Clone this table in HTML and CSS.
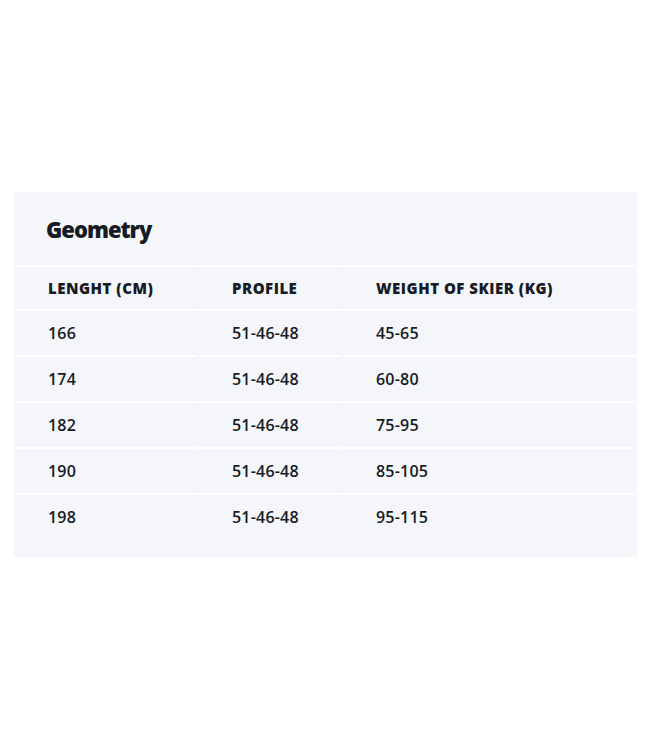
FILE: index.html
```html
<!DOCTYPE html>
<html lang="en">
<head>
<meta charset="utf-8">
<title>Geometry</title>
<link rel="stylesheet" href="styles.css">
</head>
<body>
<section class="panel">
  <h2 class="title">Geometry</h2>
  <table class="geo">
    <colgroup>
      <col class="c1"><col class="c2"><col class="c3">
    </colgroup>
    <thead>
      <tr><th>Lenght (cm)</th><th>Profile</th><th>Weight of skier (kg)</th></tr>
    </thead>
    <tbody>
      <tr><td>166</td><td>51-46-48</td><td>45-65</td></tr>
      <tr><td>174</td><td>51-46-48</td><td>60-80</td></tr>
      <tr><td>182</td><td>51-46-48</td><td>75-95</td></tr>
      <tr><td>190</td><td>51-46-48</td><td>85-105</td></tr>
      <tr><td>198</td><td>51-46-48</td><td>95-115</td></tr>
    </tbody>
  </table>
</section>
</body>
</html>
```
FILE: styles.css
```css
html, body {
  margin: 0;
  padding: 0;
  background: #ffffff;
}
body {
  font-family: "Open Sans", "Liberation Sans", sans-serif;
  color: #161b24;
}
.panel {
  margin: 192px 13px 0 14px;
  width: 623px;
  background: #f4f6fa;
  padding: 0 0 18px 0;
}
.title {
  margin: 0;
  padding: 22px 0 21px 32px;
  font-size: 22px;
  line-height: 30px;
  font-weight: 800;
  letter-spacing: -1px;
  color: #161b24;
}
.geo {
  width: 100%;
  border-collapse: separate;
  border-spacing: 2px 0;
  table-layout: fixed;
}
.c1 { width: 182px; }
.c2 { width: 142px; }
.c3 { width: auto; }
.geo th, .geo td {
  border-top: 2px solid #ffffff;
  padding: 0 0 0 32px;
  text-align: left;
  vertical-align: middle;
  white-space: nowrap;
}
.geo th {
  height: 42px;
  font-size: 15px;
  font-weight: 800;
  text-transform: uppercase;
  letter-spacing: 0.5px;
}
.geo td {
  height: 44px;
  font-size: 16px;
  font-weight: 600;
  letter-spacing: 0.2px;
}
```
